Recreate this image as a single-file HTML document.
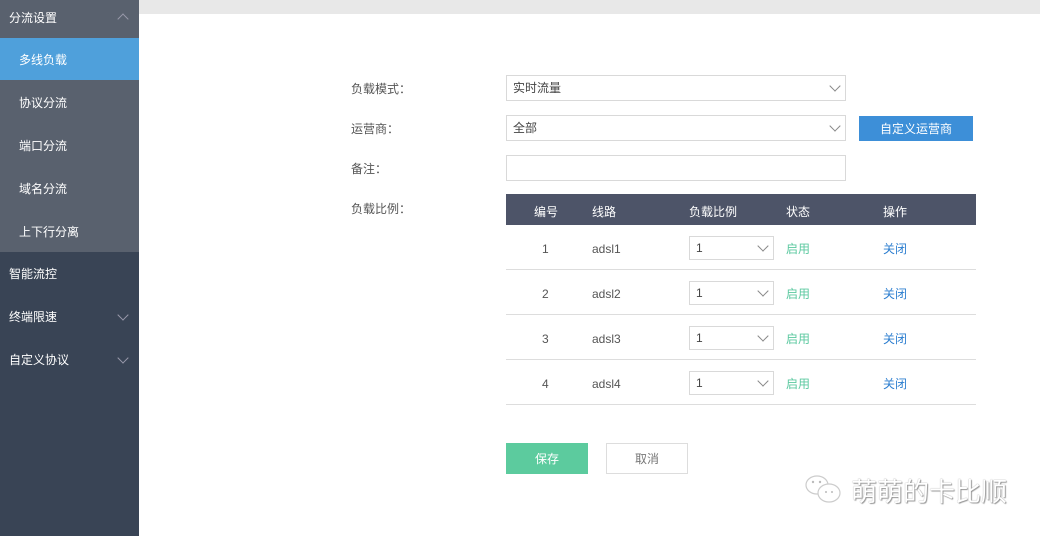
<!DOCTYPE html><html><head><meta charset="utf-8"><style>
*{margin:0;padding:0;box-sizing:border-box}
body{width:1040px;height:536px;position:relative;background:#fff;font-family:"Liberation Sans","Noto Sans CJK SC",sans-serif;font-size:12px;color:#555;overflow:hidden}
.sb{position:absolute;left:0;top:0;width:139px;height:536px;background:#394455}
.top{position:absolute;left:0;top:0;width:139px;height:252px;background:#59616e}
.it{position:absolute;left:0;width:139px;color:#fff;font-size:12px}
.chev{position:absolute;right:12px;width:8px;height:8px;border-left:1px solid #99a;border-bottom:1px solid #99a}
.bar{position:absolute;left:139px;top:0;width:901px;height:14px;background:#e8e8e8}
.ab{position:absolute}
.lbl{position:absolute;left:351px;color:#555}
.sel{position:absolute;border:1px solid #d9d9d9;background:#fff;color:#444;padding-left:6px}
.sel:after{content:"";position:absolute;right:6px;width:7px;height:7px;border-right:1px solid #888;border-bottom:1px solid #888;transform:rotate(45deg)}
.s1{left:506px;width:340px;height:26px;line-height:25px}
.s1:after{top:6px}
.s2{left:689px;width:85px;height:24px;line-height:23px}
.s2:after{top:5px}
.th{position:absolute;left:506px;top:194px;width:470px;height:31px;background:#4d5468;color:#fff}
.row{position:absolute;left:506px;width:470px;height:45px;border-bottom:1px solid #ddd}
.c{position:absolute;top:2px;line-height:45px}
</style></head><body>
<div class="sb"></div><div class="top"></div>
<div class="it" style="top:0;height:38px;line-height:36px;padding-left:9px">分流设置<div class="chev" style="top:15px;transform:rotate(135deg)"></div></div>
<div class="it" style="top:38px;height:42px;line-height:44px;padding-left:19px;background:#4fa0db">多线负载</div>
<div class="it" style="top:81px;height:43px;line-height:45px;padding-left:19px">协议分流</div>
<div class="it" style="top:124px;height:43px;line-height:45px;padding-left:19px">端口分流</div>
<div class="it" style="top:167px;height:43px;line-height:45px;padding-left:19px">域名分流</div>
<div class="it" style="top:210px;height:43px;line-height:45px;padding-left:19px">上下行分离</div>
<div class="it" style="top:252px;height:43px;line-height:45px;padding-left:9px">智能流控</div>
<div class="it" style="top:295px;height:43px;line-height:45px;padding-left:9px">终端限速<div class="chev" style="top:16px;transform:rotate(-45deg)"></div></div>
<div class="it" style="top:338px;height:43px;line-height:45px;padding-left:9px">自定义协议<div class="chev" style="top:16px;transform:rotate(-45deg)"></div></div>
<div class="bar"></div>
<div class="lbl" style="top:80px">负载模式：</div>
<div class="lbl" style="top:120px">运营商：</div>
<div class="lbl" style="top:160px">备注：</div>
<div class="lbl" style="top:200px">负载比例：</div>
<div class="sel s1" style="top:75px">实时流量</div>
<div class="sel s1" style="top:115px">全部</div>
<div class="ab" style="left:859px;top:116px;width:114px;height:25px;background:#3d8fd8;color:#fff;text-align:center;line-height:26px">自定义运营商</div>
<div class="ab" style="left:506px;top:155px;width:340px;height:26px;border:1px solid #d9d9d9"></div>
<div class="th"><span class="ab" style="left:28px;top:9px">编号</span><span class="ab" style="left:86px;top:9px">线路</span><span class="ab" style="left:183px;top:9px">负载比例</span><span class="ab" style="left:280px;top:9px">状态</span><span class="ab" style="left:377px;top:9px">操作</span></div>
<div class="row" style="top:225px"><span class="c" style="left:36px">1</span><span class="c" style="left:86px">adsl1</span><span class="c" style="left:280px;color:#5cc9a0">启用</span><span class="c" style="left:377px;color:#2e7fd0">关闭</span></div>
<div class="row" style="top:270px"><span class="c" style="left:36px">2</span><span class="c" style="left:86px">adsl2</span><span class="c" style="left:280px;color:#5cc9a0">启用</span><span class="c" style="left:377px;color:#2e7fd0">关闭</span></div>
<div class="row" style="top:315px"><span class="c" style="left:36px">3</span><span class="c" style="left:86px">adsl3</span><span class="c" style="left:280px;color:#5cc9a0">启用</span><span class="c" style="left:377px;color:#2e7fd0">关闭</span></div>
<div class="row" style="top:360px"><span class="c" style="left:36px">4</span><span class="c" style="left:86px">adsl4</span><span class="c" style="left:280px;color:#5cc9a0">启用</span><span class="c" style="left:377px;color:#2e7fd0">关闭</span></div>
<div class="sel s2" style="top:236px">1</div>
<div class="sel s2" style="top:281px">1</div>
<div class="sel s2" style="top:326px">1</div>
<div class="sel s2" style="top:371px">1</div>
<div class="ab" style="left:506px;top:443px;width:82px;height:31px;background:#5ccb9e;color:#fff;text-align:center;line-height:33px">保存</div>
<div class="ab" style="left:606px;top:443px;width:82px;height:31px;border:1px solid #ddd;color:#777;text-align:center;line-height:31px">取消</div>
<svg class="ab" style="left:803px;top:472px" width="42" height="36" viewBox="0 0 42 36"><ellipse cx="14" cy="13" rx="11" ry="9" fill="none" stroke="#ccc" stroke-width="1.2"/><ellipse cx="26" cy="21" rx="11" ry="9" fill="#fff" stroke="#ccc" stroke-width="1.2"/><circle cx="10" cy="10" r="1.2" fill="#bbb"/><circle cx="17" cy="10" r="1.2" fill="#bbb"/><circle cx="23" cy="20" r="1" fill="#bbb"/><circle cx="29" cy="20" r="1" fill="#bbb"/></svg>
<div class="ab" style="left:851px;top:472px;font-size:26px;color:#fff;text-shadow:0 0 1px #888,1px 1px 1px #999">萌萌的卡比顺</div>
</body></html>
